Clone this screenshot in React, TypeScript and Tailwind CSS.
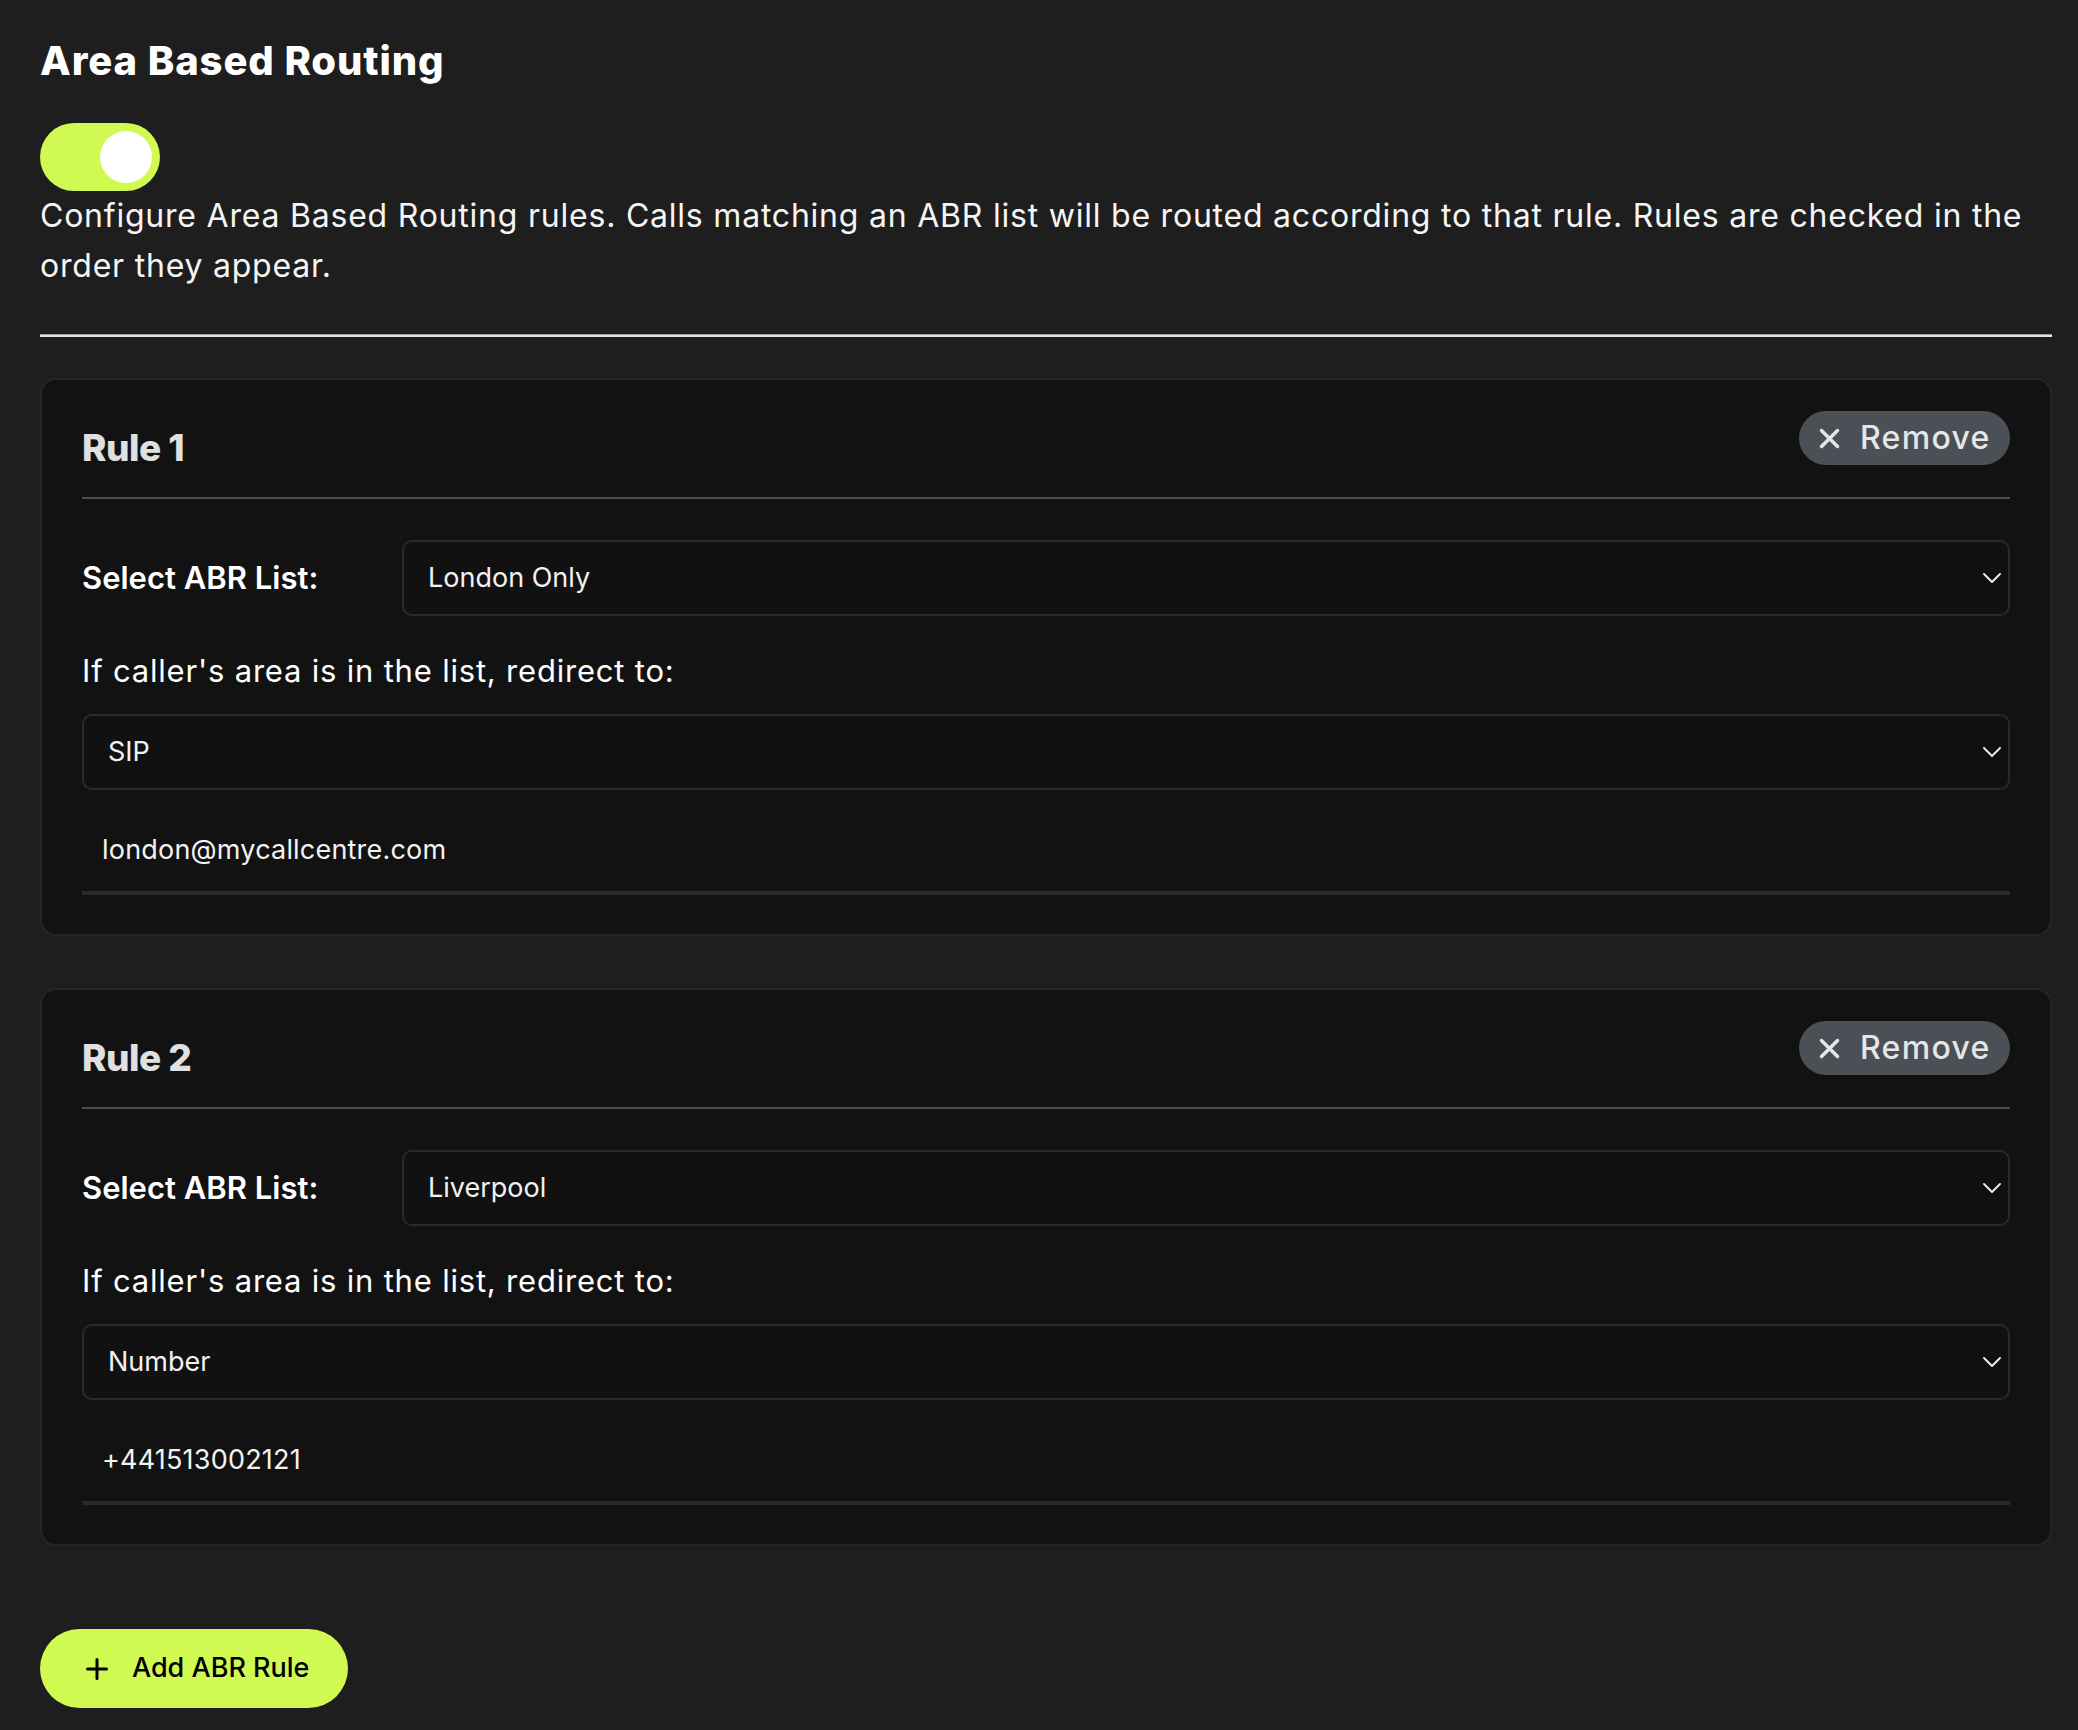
import React from "react";

const font = { fontFamily: "Inter, 'Noto Sans', sans-serif" };

function Chevron() {
    return (
        <svg width="18" height="10" viewBox="0 0 18 10" fill="none" className="shrink-0">
            <path d="M1 1 L9 9 L17 1" stroke="#f2f2f2" strokeWidth="1.8" strokeLinecap="round" strokeLinejoin="round" />
        </svg>
    );
}

function SelectBox({ value, className = "" }: { value: string; className?: string }) {
    return (
        <div
            className={`flex h-[76px] items-center justify-between rounded-[10px] border-2 border-[#2a2a2a] bg-[#111111] pl-[24px] pr-[7px] ${className}`}
        >
            <span className="text-[27px] text-[#f2f2f2]">{value}</span>
            <Chevron />
        </div>
    );
}

function RuleCard({ index, list, type, target }: { index: number; list: string; type: string; target: string }) {
    return (
        <div className="rounded-[16px] border-2 border-[#262626] bg-[#121212] px-[40px] pb-[39px]">
            {/* Header */}
            <div className="flex h-[117px] items-start justify-between pt-[31px]">
                <h3 className="mt-[14px] text-[37px] font-extrabold leading-[46px] tracking-[-0.5px] text-[#e0e0e0]">
                    Rule {index}
                </h3>
                <button className="flex h-[54px] w-[211px] items-center gap-[20px] rounded-full bg-[#4b5057] pl-[20px]">
                    <svg width="21" height="21" viewBox="0 0 21 21" fill="none">
                        <path d="M2.5 2.5 L18.5 18.5 M18.5 2.5 L2.5 18.5" stroke="#e6e6e6" strokeWidth="3.5" strokeLinecap="round" />
                    </svg>
                    <span className="text-[32px] font-medium tracking-[1.3px] text-[#e6e6e6]">Remove</span>
                </button>
            </div>
            <div className="h-[2px] bg-[#4a4f56]" />

            {/* ABR list */}
            <div className="mt-[41px] flex items-center">
                <label className="w-[320px] shrink-0 text-[31px] font-semibold text-white">Select ABR List:</label>
                <SelectBox value={list} className="flex-1" />
            </div>

            <p className="mt-[32px] text-[31px] leading-[46px] tracking-[0.8px] text-white">
                If caller's area is in the list, redirect to:
            </p>

            <SelectBox value={type} className="mt-[20px]" />

            <div className="mt-[20px] flex h-[85px] items-center border-b-4 border-[#2a2a2a] pl-[20px]">
                <span className="text-[27px] tracking-[0.2px] text-[#f2f2f2]">{target}</span>
            </div>
        </div>
    );
}

export default function App() {
    return (
        <div className="min-h-screen bg-[#1e1e1e] pb-[23px] pl-[40px] pr-[26px] pt-[38px]" style={font}>
            <h1 className="text-[40px] font-extrabold leading-[46px] tracking-[0.9px] text-white">Area Based Routing</h1>

            {/* Toggle */}
            <div className="mt-[39px] flex h-[68px] w-[120px] items-center justify-end rounded-full bg-[#d0fa52] pr-[8px]">
                <div className="h-[52px] w-[52px] rounded-full bg-white" />
            </div>

            <p className="text-[32px] leading-[50px] tracking-[0.78px] text-[#f5f5f5]">
                Configure Area Based Routing rules. Calls matching an ABR list will be routed according to that rule. Rules are checked in the
                <br />
                order they appear.
            </p>

            <div className="mt-[43px] border-b-2 border-t border-b-[#e6e6e6] border-t-[#9c9c9c]" />

            <div className="mt-[41px] flex flex-col gap-[52px]">
                <RuleCard index={1} list="London Only" type="SIP" target="london@mycallcentre.com" />
                <RuleCard index={2} list="Liverpool" type="Number" target="+441513002121" />
            </div>

            <button className="mt-[83px] flex h-[79px] w-[308px] items-center gap-[24px] rounded-full bg-[#d0fa52] pl-[46px]">
                <svg width="22" height="22" viewBox="0 0 22 22" fill="none">
                    <path d="M11 1.5 V20.5 M1.5 11 H20.5" stroke="#000" strokeWidth="3" strokeLinecap="round" />
                </svg>
                <span className="text-[27px] font-medium text-black">Add ABR Rule</span>
            </button>
        </div>
    );
}
